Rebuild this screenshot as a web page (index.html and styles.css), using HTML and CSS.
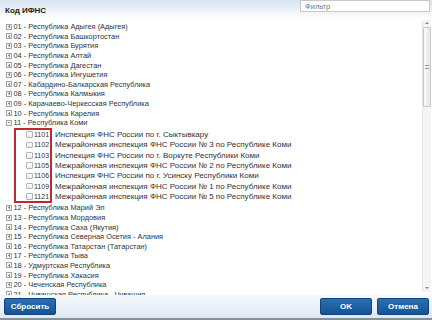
FILE: index.html
```html
<!DOCTYPE html>
<html lang="ru">
<head>
<meta charset="utf-8">
<title>Код ИФНС</title>
<link rel="stylesheet" href="styles.css">
</head>
<body>
<div class="dialog">
  <div class="header">
    <div class="title">Код ИФНС</div>
    <input class="filter" type="text" placeholder="Фильтр">
  </div>
  <div class="body">
    <div class="tree">
      <div class="node"><span class="tg plus"></span>01 - Республика Адыгея (Адыгея)</div>
      <div class="node"><span class="tg plus"></span>02 - Республика Башкортостан</div>
      <div class="node"><span class="tg plus"></span>03 - Республика Бурятия</div>
      <div class="node"><span class="tg plus"></span>04 - Республика Алтай</div>
      <div class="node"><span class="tg plus"></span>05 - Республика Дагестан</div>
      <div class="node"><span class="tg plus"></span>06 - Республика Ингушетия</div>
      <div class="node"><span class="tg plus"></span>07 - Кабардино-Балкарская Республика</div>
      <div class="node"><span class="tg plus"></span>08 - Республика Калмыкия</div>
      <div class="node"><span class="tg plus"></span>09 - Карачаево-Черкесская Республика</div>
      <div class="node"><span class="tg plus"></span>10 - Республика Карелия</div>
      <div class="node"><span class="tg minus"></span>11 - Республика Коми</div>
      <div class="children">
        <div class="leaf"><span class="cb"></span><span class="code">1101</span><span class="name">Инспекция ФНС России по г. Сыктывкару</span></div>
        <div class="leaf"><span class="cb"></span><span class="code">1102</span><span class="name">Межрайонная инспекция ФНС России № 3 по Республике Коми</span></div>
        <div class="leaf"><span class="cb"></span><span class="code">1103</span><span class="name">Инспекция ФНС России по г. Воркуте Республики Коми</span></div>
        <div class="leaf"><span class="cb"></span><span class="code">1105</span><span class="name">Межрайонная инспекция ФНС России № 2 по Республике Коми</span></div>
        <div class="leaf"><span class="cb"></span><span class="code">1106</span><span class="name">Инспекция ФНС России по г. Усинску Республики Коми</span></div>
        <div class="leaf"><span class="cb"></span><span class="code">1109</span><span class="name">Межрайонная инспекция ФНС России № 1 по Республике Коми</span></div>
        <div class="leaf"><span class="cb"></span><span class="code">1121</span><span class="name">Межрайонная инспекция ФНС России № 5 по Республике Коми</span></div>
        <div class="mark"></div>
      </div>
      <div class="node"><span class="tg plus"></span>12 - Республика Марий Эл</div>
      <div class="node"><span class="tg plus"></span>13 - Республика Мордовия</div>
      <div class="node"><span class="tg plus"></span>14 - Республика Саха (Якутия)</div>
      <div class="node"><span class="tg plus"></span>15 - Республика Северная Осетия - Алания</div>
      <div class="node"><span class="tg plus"></span>16 - Республика Татарстан (Татарстан)</div>
      <div class="node"><span class="tg plus"></span>17 - Республика Тыва</div>
      <div class="node"><span class="tg plus"></span>18 - Удмуртская Республика</div>
      <div class="node"><span class="tg plus"></span>19 - Республика Хакасия</div>
      <div class="node"><span class="tg plus"></span>20 - Чеченская Республика</div>
      <div class="node"><span class="tg plus"></span>21 - Чувашская Республика - Чувашия</div>
    </div>
    <div class="scrollbar">
      <div class="arrow up"></div>
      <div class="track"><div class="thumb"><span class="grip"></span></div></div>
      <div class="arrow down"></div>
    </div>
  </div>
  <div class="footer">
    <button class="btn">Сбросить</button>
    <div class="right">
      <button class="btn">OK</button>
      <button class="btn">Отмена</button>
    </div>
  </div>
</div>
</body>
</html>
```

FILE: styles.css
```css
* { box-sizing: border-box; }
html, body { margin: 0; padding: 0; }
body {
  width: 432px;
  height: 320px;
  overflow: hidden;
  background: #fff;
  font-family: "Liberation Sans", Arial, sans-serif;
  color: #333;
}
.dialog {
  width: 432px;
  height: 320px;
  display: flex;
  flex-direction: column;
}
.header {
  height: 19px;
  flex: none;
  display: flex;
  justify-content: space-between;
  align-items: flex-start;
  padding: 0 2px 0 5px;
  background: linear-gradient(#d8e4f1, #eef3f9 60%, #ffffff);
}
.title {
  font-size: 8px;
  font-weight: bold;
  color: #222;
  margin-top: 6px;
}
.filter {
  width: 130px;
  height: 12px;
  border: 1px solid #c8c8c8;
  background: #fff;
  font: 7.5px "Liberation Sans", Arial, sans-serif;
  padding: 0 4px;
  margin: 0;
  outline: none;
}
.filter::placeholder { color: #777; }
.body {
  flex: 1;
  min-height: 0;
  display: flex;
}
.tree {
  flex: 1;
  overflow: hidden;
  padding-top: 3px;
  font-size: 7.4px;
}
.node {
  height: 9.6px;
  display: flex;
  align-items: center;
  padding-left: 6px;
  white-space: nowrap;
}
.tg {
  width: 6px;
  height: 6px;
  border: 1px solid #a4a4a4;
  background: #f6f6f6;
  margin-right: 1.5px;
  position: relative;
  flex: none;
}
.tg::before {
  content: "";
  position: absolute;
  left: 1px;
  right: 1px;
  top: 1.5px;
  height: 1px;
  background: #888;
}
.tg.plus::after {
  content: "";
  position: absolute;
  top: 0.5px;
  bottom: 0.5px;
  left: 1.5px;
  width: 1px;
  background: #888;
}
.children {
  position: relative;
  padding: 2px 0 1.5px;
}
.leaf {
  height: 10.3px;
  display: flex;
  align-items: center;
  padding-left: 26px;
  white-space: nowrap;
}
.cb {
  width: 6.5px;
  height: 6.5px;
  border: 1px solid #b4b4b4;
  border-radius: 1px;
  background: linear-gradient(#ffffff, #ececec);
  flex: none;
  margin-right: 1.5px;
}
.code {
  width: 17px;
  flex: none;
  font-size: 7px;
}
.name {
  margin-left: 4px;
  font-size: 8px;
}
.mark {
  position: absolute;
  left: 14px;
  top: 0;
  bottom: 0;
  width: 38px;
  border: 2px solid #c2262e;
}
.scrollbar {
  width: 9px;
  flex: none;
  margin: 1px 1px 3px 0;
  display: flex;
  flex-direction: column;
  background: #f4f4f4;
  border-left: 1px solid #e6e6e6;
}
.arrow {
  height: 7px;
  flex: none;
  position: relative;
}
.arrow::after {
  content: "";
  position: absolute;
  left: 2px;
  top: 2px;
  border-left: 2px solid transparent;
  border-right: 2px solid transparent;
}
.arrow.up::after { border-bottom: 2px solid #888; }
.arrow.down::after { border-top: 2px solid #888; }
.track {
  flex: 1;
}
.thumb {
  height: 80px;
  border: 1px solid #c8c8c8;
  border-radius: 1px;
  background: linear-gradient(90deg, #f8f8f8, #e6e6e6);
  display: flex;
  align-items: center;
  justify-content: center;
}
.grip {
  width: 4px;
  height: 4px;
  border-top: 1px solid #999;
  border-bottom: 1px solid #999;
}
.footer {
  height: 25px;
  flex: none;
  display: flex;
  justify-content: space-between;
  align-items: flex-start;
  padding: 3px 3px 0 4px;
  background: linear-gradient(#f6f9fc, #dfe8f2);
  border-bottom: 2px solid #8a8f96;
}
.right {
  display: flex;
  gap: 5px;
}
.btn {
  width: 52px;
  height: 17px;
  border: 1px solid #0d447c;
  border-radius: 2px;
  background: linear-gradient(#2b6fb0, #145493);
  color: #fff;
  font: bold 8px "Liberation Sans", Arial, sans-serif;
  padding: 0;
  margin: 0;
}
```
